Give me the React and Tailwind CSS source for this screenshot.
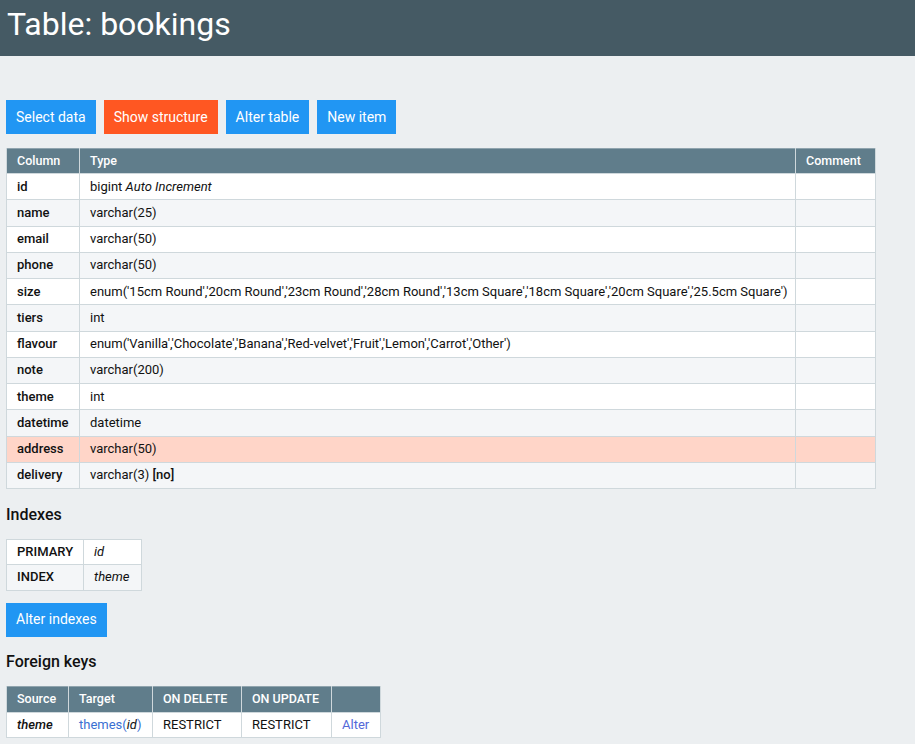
import React from 'react';

const columns = [
  { name: 'id', type: <>bigint <i>Auto Increment</i></> },
  { name: 'name', type: 'varchar(25)' },
  { name: 'email', type: 'varchar(50)' },
  { name: 'phone', type: 'varchar(50)' },
  {
    name: 'size',
    type: "enum('15cm Round','20cm Round','23cm Round','28cm Round','13cm Square','18cm Square','20cm Square','25.5cm Square')",
  },
  { name: 'tiers', type: 'int' },
  {
    name: 'flavour',
    type: "enum('Vanilla','Chocolate','Banana','Red-velvet','Fruit','Lemon','Carrot','Other')",
  },
  { name: 'note', type: 'varchar(200)' },
  { name: 'theme', type: 'int' },
  { name: 'datetime', type: 'datetime' },
  { name: 'address', type: 'varchar(50)', hot: true },
  { name: 'delivery', type: <>varchar(3) <b className="font-medium">[no]</b></> },
];

function Button({ children, active }) {
  return (
    <button
      className={`h-[34px] px-[10px] text-[14px] text-white ${active ? 'bg-[#ff5722]' : 'bg-[#2196f3]'}`}
    >
      {children}
    </button>
  );
}

const th = 'px-[10px] py-[4px] text-left font-medium text-[12.5px] leading-[16px] text-white border-x border-[#cfd8dc]';
const td = 'px-[10px] py-[4.5px] leading-[16.25px] border border-[#cfd8dc]';
const tdSm = 'px-[10px] py-[4px] leading-[16.25px] border border-[#cfd8dc]';

export default function App() {
  return (
    <div className="min-h-[744px] bg-[#eceff1] text-[13px] text-[#111]" style={{ fontFamily: 'Roboto, "Liberation Sans", sans-serif' }}>
      <div className="h-[56px] bg-[#455a64] pl-[7px] pt-[4px]">
        <h1 className="text-[32px] leading-[40px] text-white">Table: bookings</h1>
      </div>

      <div className="px-[6px]">
        <div className="mt-[44px] flex gap-[8px]">
          <Button>Select data</Button>
          <Button active>Show structure</Button>
          <Button>Alter table</Button>
          <Button>New item</Button>
        </div>

        <table className="mt-[14px] w-[869px] table-fixed border-collapse border border-[#90a4ae]">
          <colgroup>
            <col className="w-[73px]" />
            <col className="w-[716px]" />
            <col className="w-[80px]" />
          </colgroup>
          <thead>
            <tr className="bg-[#607d8b] h-[25px]">
              <th className={th}>Column</th>
              <th className={th}>Type</th>
              <th className={th}>Comment</th>
            </tr>
          </thead>
          <tbody>
            {columns.map((c, i) => (
              <tr key={c.name} className={c.hot ? 'bg-[#ffd5c8]' : i % 2 ? 'bg-[#f4f6f8]' : 'bg-white'}>
                <th className={`${td} text-left font-medium`}>{c.name}</th>
                <td className={`${td} whitespace-nowrap`}>{c.type}</td>
                <td className={td}></td>
              </tr>
            ))}
          </tbody>
        </table>

        <h3 className="mt-[16px] text-[16px] leading-[20px] font-medium">Indexes</h3>
        <table className="mt-[14px] w-[135px] table-fixed border-collapse border border-[#90a4ae]">
          <colgroup>
            <col className="w-[77px]" />
            <col className="w-[58px]" />
          </colgroup>
          <tbody>
            <tr className="bg-white">
              <th className={`${tdSm} text-left font-medium`}>PRIMARY</th>
              <td className={tdSm}><i>id</i></td>
            </tr>
            <tr className="bg-[#f4f6f8]">
              <th className={`${tdSm} text-left font-medium`}>INDEX</th>
              <td className={tdSm}><i>theme</i></td>
            </tr>
          </tbody>
        </table>

        <div className="mt-[12px] flex">
          <Button>Alter indexes</Button>
        </div>

        <h3 className="mt-[15px] text-[16px] leading-[20px] font-medium">Foreign keys</h3>
        <table className="mt-[14px] w-[374px] table-fixed border-collapse border border-[#90a4ae]">
          <colgroup>
            <col className="w-[62px]" />
            <col className="w-[84px]" />
            <col className="w-[89px]" />
            <col className="w-[90px]" />
            <col className="w-[49px]" />
          </colgroup>
          <thead>
            <tr className="bg-[#607d8b] h-[26px]">
              <th className={th}>Source</th>
              <th className={th}>Target</th>
              <th className={th}>ON DELETE</th>
              <th className={th}>ON UPDATE</th>
              <th className={th}></th>
            </tr>
          </thead>
          <tbody>
            <tr className="bg-white">
              <th className={`${tdSm} text-left font-medium`}><i>theme</i></th>
              <td className={`${tdSm} whitespace-nowrap`}>
                <a className="text-[#3a6fd2]">themes(<i className="text-[#111]">id</i>)</a>
              </td>
              <td className={tdSm}>RESTRICT</td>
              <td className={tdSm}>RESTRICT</td>
              <td className={tdSm}><a className="text-[#5468d8]">Alter</a></td>
            </tr>
          </tbody>
        </table>
      </div>
    </div>
  );
}
